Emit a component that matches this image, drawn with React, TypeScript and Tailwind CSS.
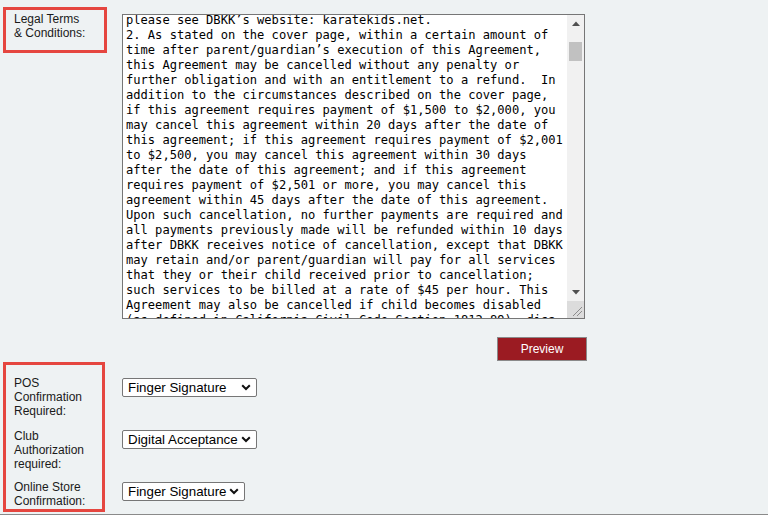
import React from 'react';

const legalText = [
  'please see DBKK\u2019s website: karatekids.net.',
  '2. As stated on the cover page, within a certain amount of',
  'time after parent/guardian\u2019s execution of this Agreement,',
  'this Agreement may be cancelled without any penalty or',
  'further obligation and with an entitlement to a refund.  In',
  'addition to the circumstances described on the cover page,',
  'if this agreement requires payment of $1,500 to $2,000, you',
  'may cancel this agreement within 20 days after the date of',
  'this agreement; if this agreement requires payment of $2,001',
  'to $2,500, you may cancel this agreement within 30 days',
  'after the date of this agreement; and if this agreement',
  'requires payment of $2,501 or more, you may cancel this',
  'agreement within 45 days after the date of this agreement.',
  'Upon such cancellation, no further payments are required and',
  'all payments previously made will be refunded within 10 days',
  'after DBKK receives notice of cancellation, except that DBKK',
  'may retain and/or parent/guardian will pay for all services',
  'that they or their child received prior to cancellation;',
  'such services to be billed at a rate of $45 per hour. This',
  'Agreement may also be cancelled if child becomes disabled',
  '(as defined in California Civil Code Section 1812.89), disa',
  'bled to the extent that the child cannot participate.',
].join('\n');

function Chevron() {
  return (
    <svg width="10" height="7" viewBox="0 0 10 7" className="pointer-events-none absolute right-[6px] top-[6px]">
      <path d="M1.2 1.2 L5 5 L8.8 1.2" fill="none" stroke="#111" strokeWidth="2" />
    </svg>
  );
}

function Dropdown({ value, options, width }: { value: string; options: string[]; width: string }) {
  return (
    <div className={`relative ${width}`}>
      <select
        defaultValue={value}
        className="block h-[19px] w-full appearance-none rounded-[2px] border border-[#767676] bg-white pl-[5px] text-[13.33px] leading-[17px] text-black outline-none"
        style={{ fontFamily: '"Liberation Sans", Arial, sans-serif' }}
      >
        {options.map((o) => (
          <option key={o}>{o}</option>
        ))}
      </select>
      <Chevron />
    </div>
  );
}

export default function App() {
  return (
    <div
      className="box-border h-[515px] w-full overflow-hidden border-b border-[#8a8a8a] bg-[#eef2f3] text-[12px] leading-[14px] text-[#1a1a1a]"
      style={{ fontFamily: '"Liberation Sans", Arial, sans-serif' }}
    >
      <div className="flex pl-[3px] pt-[7px]">
        <div className="h-[46px] w-[104px] shrink-0 border-[3px] border-[#e5463f] pl-[8px] pt-[2px]">
          Legal Terms
          <br />& Conditions:
        </div>

        <div className="ml-[15px] mt-[7px] flex w-[465px] flex-col">
          {/* textarea look-alike */}
          <div className="flex h-[305px] w-[463px] border border-[#767676] bg-white">
            <div className="flex-1 overflow-hidden pl-[3px]">
              <pre
                className="mt-[-2px] text-[12.1px] leading-[15px] text-black"
                style={{ fontFamily: '"DejaVu Sans Mono", "Liberation Mono", monospace' }}
              >
                {legalText}
              </pre>
            </div>
            <div className="flex w-[17px] flex-col bg-[#f1f1f1]">
              <div className="flex h-[17px] items-center justify-center">
                <svg width="8" height="5" viewBox="0 0 8 5">
                  <path d="M0 5 L4 0.5 L8 5 Z" fill="#505050" />
                </svg>
              </div>
              <div className="flex-1 px-[2px] pt-[10px]">
                <div className="h-[19px] w-full bg-[#c1c1c1]" />
              </div>
              <div className="flex h-[17px] items-center justify-center">
                <svg width="8" height="5" viewBox="0 0 8 5">
                  <path d="M0 0 L8 0 L4 4.5 Z" fill="#505050" />
                </svg>
              </div>
              <div className="relative h-[17px] bg-[#dcdcdc]">
                <svg width="17" height="17" viewBox="0 0 17 17" className="absolute inset-0">
                  <path d="M6 15 L15 6 M10 15 L15 10" stroke="#8c8c8c" strokeWidth="1" />
                </svg>
              </div>
            </div>
          </div>

          <button className="mt-[18px] h-[24px] w-[90px] self-end border border-[#8a8a8a] bg-[#9b1b22] text-[12px] text-white">
            Preview
          </button>
        </div>
      </div>

      <div className="mt-[1px] flex pl-[3px]">
        <div className="h-[150px] w-[102px] shrink-0 border-[3px] border-[#e5463f] pl-[8px] pt-[11px]">
          <div className="pb-[11px]">
            POS
            <br />
            Confirmation
            <br />
            Required:
          </div>
          <div className="pb-[9px]">
            Club
            <br />
            Authorization
            <br />
            required:
          </div>
          <div>
            Online Store
            <br />
            Confirmation:
          </div>
        </div>

        <div className="ml-[17px] flex flex-col gap-[33px] pt-[16px]">
          <Dropdown value="Finger Signature" options={['Finger Signature', 'Digital Acceptance', 'None']} width="w-[135px]" />
          <Dropdown value="Digital Acceptance" options={['Finger Signature', 'Digital Acceptance', 'None']} width="w-[135px]" />
          <Dropdown value="Finger Signature" options={['Finger Signature', 'None']} width="w-[123px]" />
        </div>
      </div>
    </div>
  );
}
